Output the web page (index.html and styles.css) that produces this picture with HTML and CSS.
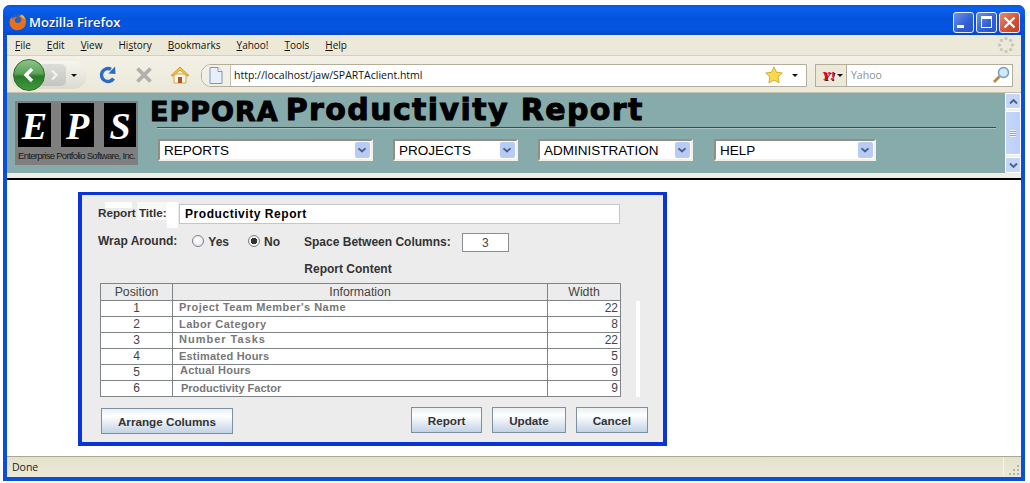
FILE: index.html
```html
<!DOCTYPE html>
<html lang="en">
<head>
    <meta charset="UTF-8">
    <title>Mozilla Firefox</title>
    <link rel="stylesheet" href="styles.css">
</head>
<body>
<div class="window">
    <div class="titlebar">
        <svg class="fx-icon" width="18" height="18" viewBox="0 0 17 17">
            <circle cx="8.500" cy="8.500" r="7.500" fill="#2d5fb0"/>
            <path d="M12 1.500c3 1.500 4.500 4.500 4 8-.6 4-4 6.800-8 6.800-4 0-7-3-7.500-6.500C.2 7 1.500 4.500 3 3.500c-.3 1 0 1.800.5 2.300C4.500 4 6.500 3.500 7.500 4c-1.500.5-2.500 2-2 3.500.5 1.500 2 2 3.500 2s3-1.500 2.500-3.500C11.200 4.500 10 3.500 9 3c1-.6 2-1.200 3-1.500z" fill="#e8701a"/>
            <path d="M12 1.500c2 1.300 3.200 3.200 3 5.500-.5-1.500-1.500-2.800-3.500-3.300.2-.8.300-1.500.5-2.200z" fill="#f6c23c"/>
        </svg>
        <span class="title-text">Mozilla Firefox</span>
        <div class="win-buttons">
            <div class="win-btn"><span class="min-glyph"></span></div>
            <div class="win-btn"><span class="max-glyph"></span></div>
            <div class="win-btn win-close">
                <svg width="13" height="13" viewBox="0 0 13 13"><path d="M1.500 1.500l10 10M11.500 1.500l-10 10" stroke="#fff" stroke-width="2.200"/></svg>
            </div>
        </div>
    </div>
    <div class="menubar">
        <span class="menu-item"><u>F</u>ile</span>
        <span class="menu-item"><u>E</u>dit</span>
        <span class="menu-item"><u>V</u>iew</span>
        <span class="menu-item">Hi<u>s</u>tory</span>
        <span class="menu-item"><u>B</u>ookmarks</span>
        <span class="menu-item"><u>Y</u>ahoo!</span>
        <span class="menu-item"><u>T</u>ools</span>
        <span class="menu-item"><u>H</u>elp</span>
        <svg class="throbber" width="18" height="18" viewBox="0 0 18 18" fill="#c9c7bb">
            <circle cx="9" cy="2.500" r="1.700"/><circle cx="13.600" cy="4.400" r="1.700"/><circle cx="15.500" cy="9" r="1.700"/><circle cx="13.600" cy="13.600" r="1.700"/>
            <circle cx="9" cy="15.500" r="1.700"/><circle cx="4.400" cy="13.600" r="1.700"/><circle cx="2.500" cy="9" r="1.700"/><circle cx="4.400" cy="4.400" r="1.700"/>
        </svg>
    </div>
    <div class="toolbar">
        <div class="nav-group">
            <div class="back-btn">
                <svg width="16" height="18" viewBox="0 0 16 18"><path d="M11 3L5 9l6 6" fill="none" stroke="#fff" stroke-width="3.400"/></svg>
            </div>
            <div class="forward-btn">
                <svg width="10" height="12" viewBox="0 0 10 12"><path d="M3 1.500L7.500 6 3 10.500" fill="none" stroke="#f2f2f2" stroke-width="2.400"/></svg>
            </div>
            <span class="arrow-down nav-arrow"></span>
        </div>
        <svg class="tool-icon reload" width="20" height="20" viewBox="0 0 20 20">
            <path d="M15.500 13.500A6.500 6.500 0 1 1 13 4.300" fill="none" stroke="#2a6cc4" stroke-width="3.400"/>
            <path d="M10.500 8.500L17.500 9 17 1.500z" fill="#2a6cc4"/>
        </svg>
        <svg class="tool-icon stop" width="18" height="18" viewBox="0 0 18 18"><path d="M2.500 2.500l13 13M15.500 2.500l-13 13" stroke="#b0b0ac" stroke-width="3.800"/></svg>
        <svg class="tool-icon home" width="20" height="20" viewBox="0 0 20 20">
            <path d="M4 9v9h12V9z" fill="#fdf6e0" stroke="#c9a75a"/>
            <path d="M1 10.500L10 2l9 8.500-2 .5-7-6-7 6z" fill="#f5c542" stroke="#c98f1c" stroke-width=".8"/>
            <rect x="8" y="12" width="4" height="6" fill="#a8592a"/>
        </svg>
        <div class="urlbar">
            <div class="page-icon">
                <svg width="14" height="17" viewBox="0 0 14 17"><path d="M1 .5h8l4 4v12H1z" fill="#e6effa" stroke="#7f97c0"/><path d="M9 .5v4h4" fill="#fff" stroke="#7f97c0"/></svg>
            </div>
            <span class="url-text">http://localhost/jaw/SPARTAclient.html</span>
            <svg class="star" width="18" height="18" viewBox="0 0 18 18"><path d="M9 1l2.500 5.300 5.800.7-4.300 4 1.100 5.800L9 14l-5.100 2.800L5 11 .7 7l5.800-.7z" fill="#fbd94f" stroke="#d6a92a"/></svg>
            <span class="arrow-down"></span>
        </div>
        <div class="searchbar">
            <div class="engine">
                <span class="yahoo-logo">Y!</span>
                <span class="arrow-down"></span>
            </div>
            <span class="search-text">Yahoo</span>
            <svg class="magnifier" width="18" height="18" viewBox="0 0 18 18">
                <circle cx="11.500" cy="6.500" r="5" fill="#d4e8f8" stroke="#6d9cc4" stroke-width="1.400"/>
                <path d="M7.500 10.500L2 16" stroke="#b8863e" stroke-width="2.600"/>
            </svg>
        </div>
    </div>
    <div class="app-header">
        <div class="logo">
            <div class="logo-letters">
                <span class="logo-tile">E</span>
                <span class="logo-tile">P</span>
                <span class="logo-tile">S</span>
            </div>
            <div class="logo-caption">Enterprise Portfolio Software, Inc.</div>
        </div>
        <div class="header-main">
            <div class="heading">
                <span class="heading-brand">EPPORA</span>
                <span class="heading-title">Productivity Report</span>
            </div>
            <div class="heading-rule"></div>
            <div class="nav-selects">
                <div class="select select-reports">REPORTS<span class="select-btn"></span></div>
                <div class="select select-projects">PROJECTS<span class="select-btn"></span></div>
                <div class="select select-admin">ADMINISTRATION<span class="select-btn"></span></div>
                <div class="select select-help">HELP<span class="select-btn"></span></div>
            </div>
        </div>
        <div class="scrollbar">
            <div class="scroll-arrow"><svg width="9" height="7" viewBox="0 0 9 7"><path d="M1 5.500l3.500-3.500L8 5.500" fill="none" stroke="#4d6185" stroke-width="1.800"/></svg></div>
            <div class="scroll-thumb"><span class="grip"></span></div>
            <div class="scroll-arrow"><svg width="9" height="7" viewBox="0 0 9 7"><path d="M1 1.500L4.500 5 8 1.500" fill="none" stroke="#4d6185" stroke-width="1.800"/></svg></div>
        </div>
    </div>
    <div class="header-edge"></div>
    <div class="content">
        <div class="panel">
            <div class="row title-row">
                <span class="field-label">Report Title:</span>
                <div class="text-field title-field">Productivity Report</div>
            </div>
            <div class="row wrap-row">
                <span class="field-label">Wrap Around:</span>
                <span class="radio radio-off"></span><span class="radio-label">Yes</span>
                <span class="radio radio-on"></span><span class="radio-label">No</span>
                <span class="field-label space-label">Space Between Columns:</span>
                <div class="text-field space-field">3</div>
            </div>
            <div class="section-title">Report Content</div>
            <div class="table-wrap">
                <table class="columns-table">
                    <thead>
                        <tr><th class="col-pos">Position</th><th class="col-info">Information</th><th class="col-width">Width</th></tr>
                    </thead>
                    <tbody>
                        <tr><td class="col-pos">1</td><td class="col-info raise">Project Team Member's Name</td><td class="col-width">22</td></tr>
                        <tr><td class="col-pos">2</td><td class="col-info">Labor Category</td><td class="col-width">8</td></tr>
                        <tr><td class="col-pos">3</td><td class="col-info raise info-tasks">Number Tasks</td><td class="col-width">22</td></tr>
                        <tr><td class="col-pos">4</td><td class="col-info info-estimated">Estimated Hours</td><td class="col-width">5</td></tr>
                        <tr><td class="col-pos">5</td><td class="col-info raise-more info-actual">Actual Hours</td><td class="col-width">9</td></tr>
                        <tr><td class="col-pos">6</td><td class="col-info info-factor">Productivity Factor</td><td class="col-width">9</td></tr>
                    </tbody>
                </table>
                <div class="scroll-stripe"></div>
            </div>
            <div class="button-row">
                <button class="btn btn-arrange">Arrange Columns</button>
                <button class="btn btn-report">Report</button>
                <button class="btn btn-update">Update</button>
                <button class="btn btn-cancel">Cancel</button>
            </div>
        </div>
    </div>
    <div class="statusbar">
        <span class="status-text">Done</span>
        <div class="status-grip">
            <svg width="14" height="14" viewBox="0 0 14 14" fill="#b8b49f">
                <rect x="10" y="2" width="2" height="2"/><rect x="6" y="6" width="2" height="2"/><rect x="10" y="6" width="2" height="2"/>
                <rect x="2" y="10" width="2" height="2"/><rect x="6" y="10" width="2" height="2"/><rect x="10" y="10" width="2" height="2"/>
            </svg>
        </div>
    </div>
</div>
</body>
</html>
```

FILE: styles.css
```css
html, body {
    margin: 0;
    height: 100%;
    background: #fff;
    overflow: hidden;
}

body {
    padding: 5px 5px 2px 3px;
    box-sizing: border-box;
    font-family: "Liberation Sans", Arial, sans-serif;
    font-size: 11px;
}

/* browser window */
.window {
    display: flex;
    flex-direction: column;
    height: 100%;
    box-sizing: border-box;
    border: solid #0a4fd8;
    border-width: 0 4px 4px 4px;
    border-radius: 7px 7px 0 0;
    background: #fff;
}

.titlebar {
    display: flex;
    align-items: center;
    height: 30px;
    box-sizing: border-box;
    margin: 0 -4px;
    padding: 4px 5px 0 6px;
    border-radius: 7px 7px 0 0;
    background: linear-gradient(#0a56d8 0, #0a60ee 12%, #0553dc 45%, #0555e3 80%, #0447c4 100%);
    flex: none;
}

.fx-icon {
    margin-right: 2px;
}

.title-text {
    color: #fff;
    font-family: "Open Sans", "DejaVu Sans", sans-serif;
    font-weight: 600;
    font-size: 13px;
    text-shadow: 1px 1px 0 #0a3a9c;
}

.win-buttons {
    display: flex;
    gap: 2px;
    margin-left: auto;
}

.win-btn {
    display: flex;
    align-items: center;
    justify-content: center;
    width: 19px;
    height: 19px;
    border: 1px solid #e8eefc;
    border-radius: 3px;
    background: linear-gradient(135deg, #6f93ea, #2f5fd6 60%, #2a55c4);
}

.win-close {
    background: linear-gradient(135deg, #e88a6c, #d5502c 60%, #c23f20);
}

.min-glyph {
    width: 7px;
    height: 3px;
    background: #fff;
    margin: 8px 6px 0 0;
}

.max-glyph {
    width: 9px;
    height: 8px;
    border: 1px solid #fff;
    border-top-width: 3px;
}

.menubar {
    display: flex;
    align-items: center;
    height: 20px;
    padding-left: 8px;
    background: #ece9d8;
    border-bottom: 1px solid #d4d0bf;
    font-family: "Open Sans", "DejaVu Sans", sans-serif;
    font-size: 10px;
    color: #111;
    flex: none;
}

.menu-item {
    margin-right: 16px;
}

.throbber {
    margin-left: auto;
    margin-right: 6px;
}

.toolbar {
    display: flex;
    align-items: center;
    height: 36px;
    box-sizing: content-box;
    background: linear-gradient(#f3f1e7, #ece9da);
    border-bottom: 1px solid #c6c2b0;
    flex: none;
}

.nav-group {
    display: flex;
    align-items: center;
    width: 77px;
    height: 28px;
    margin: 2px 0 0 3px;
    border-radius: 14px;
    background: linear-gradient(#f6f5ee, #dddbd0);
}

.back-btn {
    display: flex;
    align-items: center;
    justify-content: center;
    width: 32px;
    height: 32px;
    margin-left: 3px;
    border-radius: 50%;
    background: linear-gradient(#8fc28a, #5aa356 45%, #2c7a2c 55%, #3f9a3c);
    border: 1px solid #2f6a2e;
    box-sizing: border-box;
    flex: none;
    z-index: 1;
}

.forward-btn {
    display: flex;
    align-items: center;
    justify-content: center;
    width: 24px;
    height: 22px;
    margin-left: -3px;
    background: linear-gradient(#dcdcd8, #c4c4c0);
    border-radius: 0 5px 5px 0;
}

.arrow-down {
    width: 0;
    height: 0;
    border: solid transparent;
    border-width: 3px 3px 0 3px;
    border-top-color: #111;
    flex: none;
}

.nav-arrow {
    margin-left: 5px;
}

.tool-icon {
    flex: none;
    margin-top: 2px;
}

.reload {
    margin-left: 11px;
}

.stop {
    margin-left: 17px;
}

.home {
    margin-left: 17px;
}

.urlbar {
    display: flex;
    align-items: center;
    width: 606px;
    height: 23px;
    margin: 2px 0 0 11px;
    box-sizing: border-box;
    border: 1px solid #b3ae9b;
    border-radius: 10px 0 0 10px;
    background: #fff;
    padding-right: 8px;
}

.page-icon {
    display: flex;
    align-items: center;
    justify-content: center;
    width: 28px;
    height: 21px;
    border-right: 1px solid #c6c2b0;
    border-radius: 9px 0 0 9px;
    background: #f2f0e6;
    flex: none;
}

.url-text {
    margin-left: 3px;
    color: #111;
    font-family: "Open Sans", "DejaVu Sans", sans-serif;
    font-size: 10.5px;
}

.star {
    margin-left: auto;
    margin-right: 9px;
}

.searchbar {
    display: flex;
    align-items: center;
    width: 198px;
    height: 23px;
    margin: 2px 0 0 8px;
    box-sizing: border-box;
    border: 1px solid #b3ae9b;
    background: #fff;
}

.engine {
    display: flex;
    align-items: center;
    gap: 2px;
    width: 31px;
    height: 100%;
    padding-left: 6px;
    box-sizing: border-box;
    background: #ece9d8;
    border-right: 1px solid #b3ae9b;
    flex: none;
}

.yahoo-logo {
    color: #f00018;
    font-family: "Liberation Serif", serif;
    font-style: italic;
    font-weight: bold;
    font-size: 13px;
    line-height: 1;
    text-shadow: 1px 1px 0 #300;
}

.search-text {
    margin-left: 4px;
    color: #8f8f8f;
    font-family: "Open Sans", sans-serif;
    font-size: 10.5px;
}

.magnifier {
    margin-left: auto;
    margin-right: 2px;
}

/* application header frame */
.app-header {
    display: flex;
    height: 80px;
    background: #87abab;
    flex: none;
}

.logo {
    width: 123px;
    height: 64px;
    margin: 8px 0 0 8px;
    box-sizing: border-box;
    padding: 2px 2px 0 3px;
    background: #7f7f7f;
    flex: none;
}

.logo-letters {
    display: flex;
    justify-content: space-between;
}

.logo-tile {
    width: 33px;
    height: 44px;
    background: #000;
    color: #fff;
    font-family: "Liberation Serif", serif;
    font-style: italic;
    font-weight: bold;
    font-size: 38px;
    line-height: 46px;
    text-align: center;
}

.logo-tile:nth-child(2) {
    margin-left: 10px;
}

.logo-tile:nth-child(3) {
    width: 32px;
    margin-left: 10px;
}

.logo-caption {
    margin-top: 3px;
    color: #1a1a1a;
    font-size: 9.5px;
    letter-spacing: -0.7px;
    white-space: nowrap;
}

.header-main {
    width: 846px;
    margin-left: 12px;
    flex: none;
}

.heading {
    display: flex;
    align-items: flex-end;
    height: 31px;
    color: #000;
    font-family: "DejaVu Sans", sans-serif;
    font-weight: bold;
    white-space: nowrap;
}

.heading-brand {
    font-size: 27px;
    line-height: 29px;
    letter-spacing: 1px;
    margin-bottom: -2px;
    -webkit-text-stroke: 1px #000;
}

.heading-title {
    margin-left: 7px;
    font-size: 30px;
    line-height: 32px;
    margin-bottom: -2px;
    letter-spacing: 1.4px;
    -webkit-text-stroke: 1px #000;
}

.heading-rule {
    margin: 3px 0 0 7px;
    height: 1px;
    background: #3c4a4a;
    border-bottom: 1px solid #a9c3c3;
}

.nav-selects {
    display: flex;
    margin: 10px 0 0 8px;
}

.select {
    display: flex;
    align-items: center;
    height: 22px;
    box-sizing: border-box;
    padding-left: 4px;
    border: 2px solid #f2f0e8;
    border-top-color: #8f8f84;
    border-left-color: #8f8f84;
    background: #fff;
    color: #000;
    font-size: 13.5px;
    flex: none;
}

.select-reports { width: 215px; }
.select-projects { width: 125px; margin-left: 20px; }
.select-admin { width: 155px; margin-left: 20px; }
.select-help { width: 162px; margin-left: 21px; }

.select-btn {
    position: relative;
    width: 15px;
    height: 16px;
    margin-left: auto;
    margin-right: 1px;
    background: #b7cbf5;
    border-radius: 2px;
}

.select-btn::after {
    content: "";
    position: absolute;
    left: 4px;
    top: 4px;
    width: 4px;
    height: 4px;
    border: solid #4d6185;
    border-width: 0 2px 2px 0;
    transform: scale(1, 0.8) rotate(45deg);
}

.scrollbar {
    display: flex;
    flex-direction: column;
    width: 16px;
    margin-left: auto;
    background: #f0f0ea;
    flex: none;
}

.scroll-arrow {
    display: flex;
    align-items: center;
    justify-content: center;
    height: 16px;
    background: #c5d6f8;
    border: 1px solid #fff;
    box-sizing: border-box;
    border-radius: 2px;
    flex: none;
}

.scroll-thumb {
    display: flex;
    flex: 1;
    align-items: center;
    justify-content: center;
    margin: 2px 0;
    background: linear-gradient(90deg, #c5d6f8, #bccff8);
    border: 1px solid #fff;
    border-radius: 2px;
}

.grip {
    width: 6px;
    height: 7px;
    background: repeating-linear-gradient(#eef3fe 0 1px, #8fa8d8 1px 2px);
}

.header-edge {
    height: 5px;
    background: #f1efe4;
    border-bottom: 2px solid #000;
    flex: none;
}

/* report form */
.content {
    flex: 1;
    padding: 12px 0 0 71px;
    background: #fff;
}

/* the white blocks near the title label are scan marks in the original */
.panel {
    width: 589px;
    height: 254px;
    box-sizing: border-box;
    border: 4px solid #0a33d8;
    border-top-width: 3px;
    background:
        linear-gradient(#fff, #fff) 23px 7px / 27px 6px no-repeat,
        linear-gradient(#f8f8f8, #f8f8f8) 55px 7px / 30px 18px no-repeat,
        linear-gradient(#fff, #fff) 85px 7px / 11px 26px no-repeat,
        #ececec;
    padding: 9px 15px 0 18px;
}

.row {
    display: flex;
    align-items: flex-start;
    margin-left: -2px;
}

.field-label {
    color: #333;
    font-size: 12px;
    font-weight: bold;
    line-height: 17px;
    white-space: nowrap;
}

.title-row {
    height: 20px;
}

.title-row .field-label {
    width: 81px;
    flex: none;
    font-size: 11.7px;
}

.text-field {
    box-sizing: border-box;
    background: #fff;
    border: 1px solid #c3c6cb;
}

.title-field {
    width: 441px;
    height: 20px;
    padding-left: 5px;
    color: #000;
    font-size: 12px;
    font-weight: bold;
    letter-spacing: 0.55px;
    line-height: 18px;
}

.wrap-row {
    height: 19px;
    margin-top: 9px;
}

.radio {
    width: 12px;
    height: 12px;
    margin: 2px 4px 0 0;
    box-sizing: border-box;
    border: 1px solid #7c8087;
    border-radius: 50%;
    flex: none;
}

.radio-off {
    margin-left: 15px;
    background: radial-gradient(circle at 40% 40%, #fff, #e2e4ea);
}

.radio-on {
    margin-left: 19px;
    background: radial-gradient(circle, #333 0 3px, #eef0f4 3.500px);
}

.radio-label {
    color: #333;
    font-size: 12px;
    font-weight: bold;
    line-height: 19px;
}

.space-label {
    margin-left: 24px;
    line-height: 19px;
}

.space-field {
    width: 47px;
    height: 19px;
    margin-left: 11px;
    border-color: #8a8d92;
    text-align: center;
    color: #444;
    font-size: 12px;
    line-height: 19px;
}

.section-title {
    width: 496px;
    margin-top: 10px;
    color: #333;
    font-size: 12px;
    font-weight: bold;
    text-align: center;
    line-height: 14px;
}

.table-wrap {
    display: flex;
    align-items: flex-end;
    margin-top: 7px;
}

.columns-table {
    width: 521px;
    table-layout: fixed;
    border-collapse: collapse;
    font-size: 12px;
    flex: none;
}

.columns-table th,
.columns-table td {
    height: 15px;
    padding: 0 1px;
    border: 1px solid #7f8488;
    line-height: 15px;
    box-sizing: content-box;
}

.columns-table th {
    height: 14px;
    padding-top: 1px;
    background: #ececec;
    color: #444;
    font-size: 12.3px;
    font-weight: normal;
    text-align: center;
}

.columns-table td {
    background: #fff;
    color: #444;
    text-align: center;
}

.col-pos { width: 69px; }
.col-width { width: 70px; }

.columns-table td.col-info {
    padding-left: 6px;
    color: #777;
    font-size: 11px;
    font-weight: bold;
    letter-spacing: 0.45px;
    text-align: left;
}

/* info cells sit a little uneven in the original */
.columns-table td.raise {
    height: 13px;
    line-height: 13px;
    padding-bottom: 2px;
}

.columns-table td.raise-more {
    height: 11px;
    line-height: 11px;
    padding-bottom: 4px;
}

.columns-table td.info-tasks { letter-spacing: 1px; }
.columns-table td.info-estimated { letter-spacing: 0.2px; }
.columns-table td.info-actual { padding-left: 7px; letter-spacing: 0.2px; }
.columns-table td.info-factor { padding-left: 8px; letter-spacing: 0; }

.columns-table td.col-width {
    padding-right: 2px;
    text-align: right;
    font-size: 12px;
}

.scroll-stripe {
    width: 4px;
    height: 96px;
    margin-left: 15px;
    background: #fff;
}

.button-row {
    display: flex;
    margin-top: 10px;
    margin-left: 1px;
}

.btn {
    height: 26px;
    padding: 0;
    border: 1px solid #7e8fa0;
    background: linear-gradient(#e9eff6, #fff 30%, #c2d3e5);
    color: #333;
    font-family: "Liberation Sans", Arial, sans-serif;
    font-size: 11.7px;
    font-weight: bold;
}

.btn-arrange { width: 133px; margin-top: 1px; }
.btn-report { width: 72px; margin-left: 178px; }
.btn-update { width: 74px; margin-left: 10px; }
.btn-cancel { width: 73px; margin-left: 10px; }

.statusbar {
    display: flex;
    align-items: center;
    justify-content: space-between;
    height: 21px;
    padding-left: 5px;
    box-sizing: border-box;
    background: linear-gradient(#e4e1cd, #ece9d8);
    border-top: 1px solid #aaa793;
    font-family: "Open Sans", sans-serif;
    font-size: 10.5px;
    color: #222;
    flex: none;
}

.status-grip {
    display: flex;
    align-items: flex-end;
    justify-content: flex-end;
    width: 17px;
    height: 100%;
    border-left: 1px solid #f6f4ea;
}
```
